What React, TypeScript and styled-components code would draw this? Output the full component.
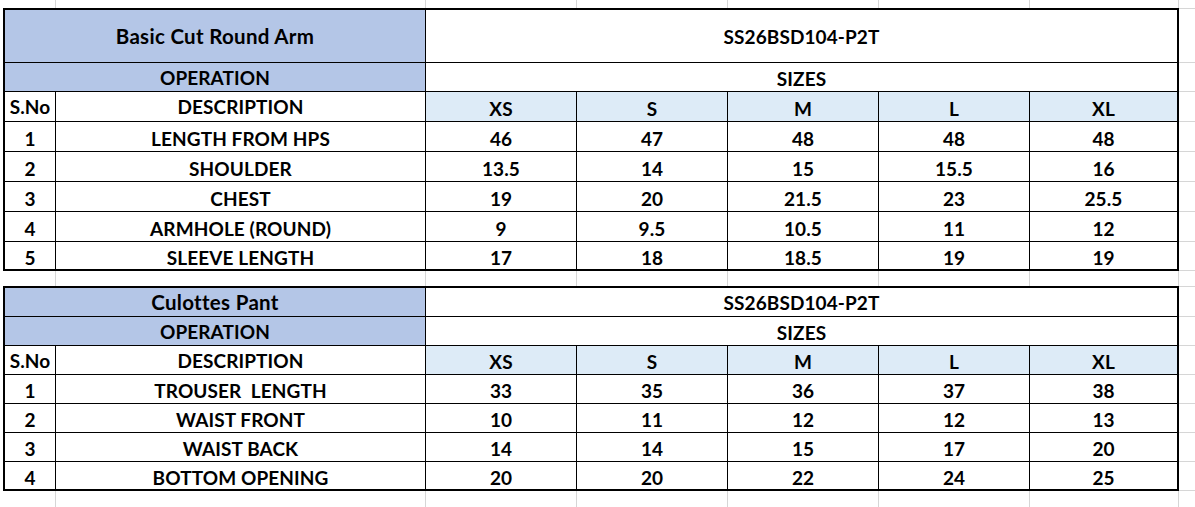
import React from 'react';
import styled, { createGlobalStyle } from 'styled-components';

const GlobalStyle = createGlobalStyle`
  * {
    box-sizing: border-box;
  }

  body {
    margin: 0;
    background: #ffffff;
    font-family: Lato, "Liberation Sans", sans-serif;
  }
`;

const GRID = '#d6d6d6';
const INK = '#000000';

const Sheet = styled.div`
  width: 1195px;
  height: 507px;
  overflow: hidden;
  display: flex;
  flex-direction: column;
  background: #ffffff;
`;

const Row = styled.div<{ $h: number }>`
  display: grid;
  grid-template-columns: 53px 370px 151px 151px 151px 151px 149px 1fr;
  height: ${(p) => p.$h}px;
  padding-left: 3px;
  flex-shrink: 0;
`;

const GridCell = styled.div<{ $open?: boolean; $line?: boolean; $lineTop?: boolean }>`
  border-right: ${(p) => (p.$open ? 'none' : `1px solid ${GRID}`)};
  border-bottom: ${(p) => (p.$line ? `1px solid ${GRID}` : 'none')};
  border-top: ${(p) => (p.$lineTop ? `1px solid ${GRID}` : 'none')};
`;

interface SpecCellProps {
  $span?: number;
  $bg?: string;
  $first?: boolean;
  $last?: boolean;
  $head?: boolean;
  $end?: boolean;
  $low?: boolean;
  $big?: boolean;
}

const SpecCell = styled.div<SpecCellProps>`
  grid-column: span ${(p) => p.$span || 1};
  display: flex;
  align-items: center;
  justify-content: center;
  background: ${(p) => p.$bg || '#ffffff'};
  border-right: ${(p) => (p.$last ? 2 : 1)}px solid ${INK};
  border-bottom: ${(p) => (p.$end ? 2 : 1)}px solid ${INK};
  border-left: ${(p) => (p.$first ? `2px solid ${INK}` : 'none')};
  border-top: ${(p) => (p.$head ? `2px solid ${INK}` : 'none')};
  padding-top: ${(p) => (p.$low ? 3 : 0)}px;
  color: #000000;
  font-size: ${(p) => (p.$big ? 20.5 : 19)}px;
  font-weight: 700;
  letter-spacing: ${(p) => (p.$big ? 0.3 : 0.1)}px;
  white-space: pre;
`;

const HEAD_BLUE = '#b4c6e7';
const SIZE_BLUE = '#ddebf7';
const SIZES = ['XS', 'S', 'M', 'L', 'XL'];

interface SpecTable {
  title: string;
  code: string;
  titleHeight: number;
  headHeight: number;
  rowHeight: number;
  rows: Array<{ no: string; name: string; values: string[] }>;
}

const tables: SpecTable[] = [
  {
    title: 'Basic Cut Round Arm',
    code: 'SS26BSD104-P2T',
    titleHeight: 55,
    headHeight: 30,
    rowHeight: 30,
    rows: [
      { no: '1', name: 'LENGTH FROM HPS', values: ['46', '47', '48', '48', '48'] },
      { no: '2', name: 'SHOULDER', values: ['13.5', '14', '15', '15.5', '16'] },
      { no: '3', name: 'CHEST', values: ['19', '20', '21.5', '23', '25.5'] },
      { no: '4', name: 'ARMHOLE (ROUND)', values: ['9', '9.5', '10.5', '11', '12'] },
      { no: '5', name: 'SLEEVE LENGTH', values: ['17', '18', '18.5', '19', '19'] },
    ],
  },
  {
    title: 'Culottes Pant',
    code: 'SS26BSD104-P2T',
    titleHeight: 31,
    headHeight: 29,
    rowHeight: 29,
    rows: [
      { no: '1', name: 'TROUSER  LENGTH', values: ['33', '35', '36', '37', '38'] },
      { no: '2', name: 'WAIST FRONT', values: ['10', '11', '12', '12', '13'] },
      { no: '3', name: 'WAIST BACK', values: ['14', '14', '15', '17', '20'] },
      { no: '4', name: 'BOTTOM OPENING', values: ['20', '20', '22', '24', '25'] },
    ],
  },
];

function EmptyRow({ height }: { height: number }) {
  return (
    <Row $h={height}>
      {Array.from({ length: 7 }).map((_, i) => (
        <GridCell key={i} />
      ))}
      <GridCell $open />
    </Row>
  );
}

function Table({ table }: { table: SpecTable }) {
  const lastIndex = table.rows.length - 1;

  return (
    <>
      <Row $h={table.titleHeight}>
        <SpecCell $span={2} $bg={HEAD_BLUE} $first $head $big>
          {table.title}
        </SpecCell>
        <SpecCell $span={5} $last $head>
          {table.code}
        </SpecCell>
        <GridCell $open $line $lineTop />
      </Row>
      <Row $h={29}>
        <SpecCell $span={2} $bg={HEAD_BLUE} $first>
          OPERATION
        </SpecCell>
        <SpecCell $span={5} $last $low>
          SIZES
        </SpecCell>
        <GridCell $open $line />
      </Row>
      <Row $h={table.headHeight}>
        <SpecCell $first>S.No</SpecCell>
        <SpecCell>DESCRIPTION</SpecCell>
        {SIZES.map((size, i) => (
          <SpecCell key={size} $bg={SIZE_BLUE} $last={i === SIZES.length - 1} $low>
            {size}
          </SpecCell>
        ))}
        <GridCell $open $line />
      </Row>
      {table.rows.map((row, r) => (
        <Row key={row.no} $h={r === lastIndex ? 29 : table.rowHeight}>
          <SpecCell $first $end={r === lastIndex} $low>
            {row.no}
          </SpecCell>
          <SpecCell $end={r === lastIndex} $low>
            {row.name}
          </SpecCell>
          {row.values.map((value, i) => (
            <SpecCell key={SIZES[i]} $end={r === lastIndex} $last={i === row.values.length - 1} $low>
              {value}
            </SpecCell>
          ))}
          <GridCell $open $line />
        </Row>
      ))}
    </>
  );
}

export default function App() {
  return (
    <>
      <GlobalStyle />
      <Sheet>
        <EmptyRow height={8} />
        <Table table={tables[0]} />
        <EmptyRow height={15} />
        <Table table={tables[1]} />
        <EmptyRow height={20} />
      </Sheet>
    </>
  );
}
